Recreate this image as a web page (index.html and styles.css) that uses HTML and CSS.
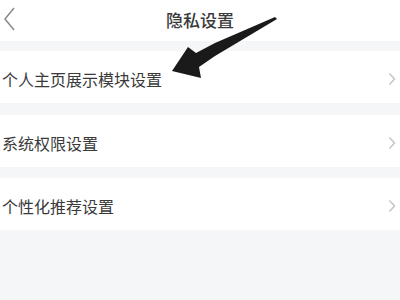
FILE: index.html
```html
<!DOCTYPE html>
<html lang="zh-CN">
<head>
<meta charset="utf-8">
<link rel="stylesheet" href="styles.css">
</head>
<body>
<div class="page">
  <header class="nav">
    <svg class="back" width="14" height="26" viewBox="0 0 14 26"><path d="M12 2 L3 13 L12 24" fill="none" stroke="#888" stroke-width="1.5"/></svg>
    <h1 class="title">隐私设置</h1>
  </header>
  <div class="gap g1"></div>
  <div class="row"><span class="label">个人主页展示模块设置</span><svg class="chev" width="8" height="14" viewBox="0 0 8 14"><path d="M1.5 1.5 L6.5 7 L1.5 12.5" fill="none" stroke="#c4c4c4" stroke-width="1.5"/></svg></div>
  <div class="gap g2"></div>
  <div class="row"><span class="label">系统权限设置</span><svg class="chev" width="8" height="14" viewBox="0 0 8 14"><path d="M1.5 1.5 L6.5 7 L1.5 12.5" fill="none" stroke="#c4c4c4" stroke-width="1.5"/></svg></div>
  <div class="gap g3"></div>
  <div class="row"><span class="label">个性化推荐设置</span><svg class="chev" width="8" height="14" viewBox="0 0 8 14"><path d="M1.5 1.5 L6.5 7 L1.5 12.5" fill="none" stroke="#c4c4c4" stroke-width="1.5"/></svg></div>
  <svg class="arrow" width="400" height="100" viewBox="0 0 400 100"><polygon points="275,17 215,43 196,53 188,47 172,71 201,78 199,67 215,56 277,19" fill="#1a1a1a"/></svg>
</div>
</body>
</html>
```
FILE: styles.css
```css
html, body {
  margin: 0;
  padding: 0;
  background: #f5f6f7;
}
.page {
  position: relative;
  width: 400px;
  height: 300px;
  overflow: hidden;
  font-family: "Noto Sans CJK SC", "Noto Sans", sans-serif;
}
.nav {
  height: 41px;
  background: #fff;
  display: flex;
  align-items: center;
  justify-content: center;
  position: relative;
}
.back {
  position: absolute;
  left: 2px;
  top: 6px;
}
.title {
  margin: 0;
  font-size: 17px;
  font-weight: 500;
  color: #3a3a3a;
  line-height: 1;
  margin-top: -2px;
}
.gap { background: #f5f6f7; }
.g1 { height: 10px; }
.g2 { height: 12px; }
.g3 { height: 11px; }
.row {
  height: 52px;
  background: #fff;
  display: flex;
  align-items: center;
  justify-content: space-between;
  padding: 0 4px 0 2px;
}
.label {
  font-size: 16px;
  color: #3a3a3a;
  line-height: 1;
  margin-top: 4px;
}
.chev {
  margin-top: 3px;
}
.arrow {
  position: absolute;
  left: 0;
  top: 0;
}
```
